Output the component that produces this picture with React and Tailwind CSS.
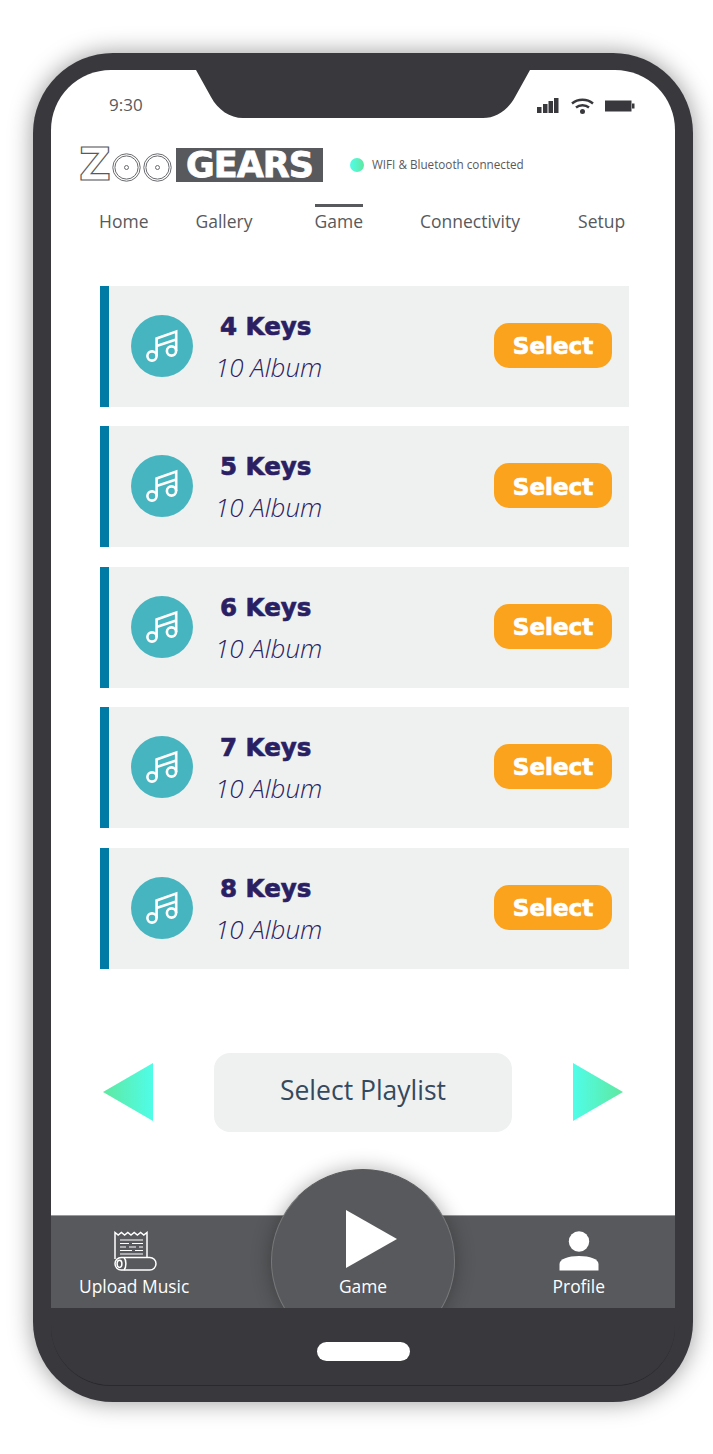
const NAV = [
  { label: 'Home', cls: 'ml-[48px]' },
  { label: 'Gallery', cls: 'ml-[47px]' },
  { label: 'Game', cls: 'ml-[62px]', active: true },
  { label: 'Connectivity', cls: 'ml-[57px]' },
  { label: 'Setup', cls: 'ml-[58px]' },
]

const KEYS = ['4 Keys', '5 Keys', '6 Keys', '7 Keys', '8 Keys']

function MusicIcon() {
  return (
    <svg width="62" height="62" viewBox="0 0 62 62" fill="none" stroke="white" strokeWidth="2.6">
      <circle cx="21" cy="41" r="4.6" />
      <circle cx="40.5" cy="36" r="4.6" />
      <path d="M25.6 41V23.5L45.2 16.5V36" />
      <path d="M25.6 31L45.2 24.5" />
    </svg>
  )
}

function KeyCard({ title }) {
  return (
    <div className="flex h-[121px] items-center border-l-[9px] border-[#007ba5] bg-[#eff1f1]">
      <div className="-mt-[1px] ml-[22px] flex h-[62px] w-[62px] items-center justify-center rounded-full bg-[#47b5bf]">
        <MusicIcon />
      </div>
      <div className="ml-[23px] flex w-[125px] flex-col">
        <span className="mt-[1px] ml-[4px] text-[24.5px] leading-[32px] font-bold text-[#2b1f63] font-['DejaVu_Sans',sans-serif] [-webkit-text-stroke:0.7px_#2b1f63]">{title}</span>
        <span className="mt-[8px] -ml-[1px] text-[26px] leading-[32px] font-light italic text-[#2b2360] font-['Open_Sans',sans-serif]">10 Album</span>
      </div>
      <button className="-mt-[2px] ml-auto mr-[17px] h-[45px] w-[118px] rounded-[15px] bg-[#fba31c] pt-[2px] text-[23px] font-bold text-white font-['DejaVu_Sans',sans-serif] [-webkit-text-stroke:0.7px_white]">
        Select
      </button>
    </div>
  )
}

function Triangle({ flip }) {
  return (
    <svg width="50" height="58" viewBox="0 0 50 58" className={flip ? 'rotate-180' : ''}>
      <defs>
        <linearGradient id={flip ? 'triR' : 'triL'} x1="0" x2="1" y1="0" y2="0">
          <stop offset="0" stopColor="#5fe8a0" />
          <stop offset="1" stopColor="#4ffde8" />
        </linearGradient>
      </defs>
      <path d="M0 29L50 0V58Z" fill={`url(#${flip ? 'triR' : 'triL'})`} />
    </svg>
  )
}

function UploadIcon() {
  return (
    <svg width="43" height="40" viewBox="0 0 43 40" fill="none" stroke="white" strokeWidth="1.5" className="ml-[2px]">
      <path d="M1 28V1.5L4.2 4 7.4 1.5 10.6 4 13.8 1.5 17 4 20.2 1.5 23.4 4 26.6 1.5 29.8 4 33 1.5V26.5" />
      <rect x="1" y="26.5" width="41" height="12.5" rx="6.2" />
      <ellipse cx="5.5" cy="32.8" rx="2.4" ry="3.6" />
      <path d="M10 26.5C12.5 29 12.5 36.5 10 39" />
      <path d="M6 9H29M6 12.5H15M18 12.5H29M6 16H12M15 16H22M25 16H29M6 19.5H18M21 19.5H29M6 23H29" strokeWidth="1.2" />
    </svg>
  )
}

function ProfileIcon() {
  return (
    <svg width="40" height="40" viewBox="0 0 40 40" fill="white">
      <circle cx="20" cy="10.5" r="10.2" />
      <path d="M0.5 39.5V33C0.5 28 9 25 20 25S39.5 28 39.5 33V39.5Z" />
    </svg>
  )
}

function StatusIcons() {
  return (
    <div className="flex items-center">
      <svg width="22" height="16" viewBox="0 0 22 16" fill="#39383d">
        <rect x="0" y="9" width="4.5" height="6" />
        <rect x="6" y="6" width="4.5" height="9" />
        <rect x="11.5" y="3" width="4.5" height="12" />
        <rect x="17" y="0" width="4.5" height="15" />
      </svg>
      <svg className="ml-[12px]" width="23" height="16" viewBox="0 0 23 16" fill="none" stroke="#39383d" strokeWidth="2.4">
        <path d="M1 5.5C7 0.5 16 0.5 22 5.5" />
        <path d="M5 9.5C8.5 6.5 14.5 6.5 18 9.5" />
        <circle cx="11.5" cy="13.5" r="1.3" fill="#39383d" />
      </svg>
      <svg className="ml-[11px]" width="30" height="12" viewBox="0 0 30 12" fill="#39383d">
        <rect x="0" y="0.5" width="26.5" height="11" />
        <rect x="27" y="3.5" width="2.5" height="5" />
      </svg>
    </div>
  )
}

function Logo() {
  return (
    <div className="ml-[28px] flex h-[34px] w-[244px] items-center">
      <span className="w-[33px] text-[44px] leading-[34px] font-bold text-white font-['DejaVu_Sans',sans-serif] [-webkit-text-stroke:1.2px_#58595c]">Z</span>
      <svg width="62" height="29" viewBox="0 0 62 29" fill="none" stroke="#6a6b6e" className="mt-[5px]">
        <circle cx="14.5" cy="14.5" r="13.7" />
        <circle cx="14.5" cy="14.5" r="11.6" />
        <circle cx="14.5" cy="14.5" r="2" />
        <circle cx="45.5" cy="14.5" r="13.7" />
        <circle cx="45.5" cy="14.5" r="11.6" />
        <circle cx="45.5" cy="14.5" r="2" />
      </svg>
      <span className="ml-[2px] flex h-[34px] w-[147px] items-center justify-center bg-[#58595c] text-[35px] leading-[34px] font-bold tracking-[-1px] text-white font-['DejaVu_Sans',sans-serif] [-webkit-text-stroke:0.8px_white]">
        GEARS
      </span>
    </div>
  )
}

export default function App() {
  return (
    <div className="h-[1454px] w-[713px] overflow-hidden bg-white pl-[33px] pt-[53px]">
      <div className="h-[1349px] w-[660px] rounded-[80px] bg-[#39383d] px-[18px] pt-[17px] shadow-[0_0_24px_rgba(0,0,0,0.4)]">
        <div className="relative flex h-[1316px] w-[624px] flex-col overflow-hidden rounded-[60px] border-b border-[#2a292d] bg-[#39383d] font-['Open_Sans',sans-serif]">
          <div className="relative bg-white pb-[83px]">
            {/* notch */}
            <svg className="absolute left-[145px] top-0" width="334" height="48" viewBox="0 0 334 48" fill="#39383d">
              <path d="M0 0H334L319 27C312 40 300 48 287 48H47C34 48 22 40 15 27Z" />
            </svg>

            {/* status bar */}
            <div className="flex h-[78px] items-start justify-between pl-[58px] pr-[40px] pt-[24px]">
              <span className="text-[17px] leading-[22px] text-[#58595c]">9:30</span>
              <div className="pt-[4px]"><StatusIcons /></div>
            </div>

            {/* logo + connection */}
            <div className="flex items-center">
              <Logo />
              <span className="ml-[27px] h-[14px] w-[14px] rounded-full bg-gradient-to-r from-[#4ffde8] to-[#5fe8a0]" />
              <span className="ml-[8px] text-[11.7px] text-[#58595c]">WIFI &amp; Bluetooth connected</span>
            </div>

            {/* nav */}
            <div className="mt-[22px] flex h-[82px] items-start">
              {NAV.map(n => (
                <div key={n.label} className={`${n.cls} relative pt-[5px] text-[17.5px] leading-[24px] text-[#58595c]`}>
                  {n.active && <div className="absolute left-0 right-0 top-0 h-[3px] bg-[#58595c]" />}
                  {n.label}
                </div>
              ))}
            </div>

            {/* list */}
            <div className="ml-[49px] flex w-[529px] flex-col gap-[19.4px]">
              {KEYS.map(k => <KeyCard key={k} title={k} />)}
            </div>

            {/* pager */}
            <div className="ml-[52px] mt-[84.5px] flex items-center">
              <div className="-mt-[1px]"><Triangle /></div>
              <div className="ml-[61px] flex h-[79px] w-[298px] items-center justify-center rounded-[16px] bg-[#eff1f1] pb-[4px] text-[26.5px] text-[#34495e]">
                Select Playlist
              </div>
              <div className="-mt-[1px] ml-[61px]"><Triangle flip /></div>
            </div>
          </div>

          {/* tab bar */}
          <div className="relative flex h-[93px] items-start justify-between border-t border-[#9a9a9c] bg-[#58595c] pl-[28px] pr-[70px] pt-[15px] text-white">
            <div className="flex flex-col items-center">
              <UploadIcon />
              <span className="mt-[3px] text-[17.4px] leading-[24px]">Upload Music</span>
            </div>
            <div className="flex flex-col items-center">
              <ProfileIcon />
              <span className="mt-[3px] text-[17.4px] leading-[24px]">Profile</span>
            </div>
            {/* raised play button, cut off by the tab bar's lower edge */}
            <div className="absolute -top-[90px] bottom-0 left-[180px] w-[264px] overflow-hidden">
              <div className="absolute left-[40px] top-[43px] flex h-[184px] w-[184px] flex-col items-center rounded-full border border-[#77787a] border-t-[#58595c] bg-[#58595c] pt-[40px] shadow-[0_0_20px_rgba(0,0,0,0.3)]">
                <svg width="52" height="58" viewBox="0 0 52 58" className="ml-[17px]" fill="white">
                  <path d="M0 0L51 29L0 58Z" />
                </svg>
                <span className="mt-[6px] text-[17.4px] leading-[24px] text-white">Game</span>
              </div>
            </div>
          </div>

          {/* home bar */}
          <div className="flex flex-1 items-start justify-center bg-[#39383d] pt-[34px]">
            <div className="h-[19px] w-[93px] rounded-full bg-white" />
          </div>
        </div>
      </div>
    </div>
  )
}
